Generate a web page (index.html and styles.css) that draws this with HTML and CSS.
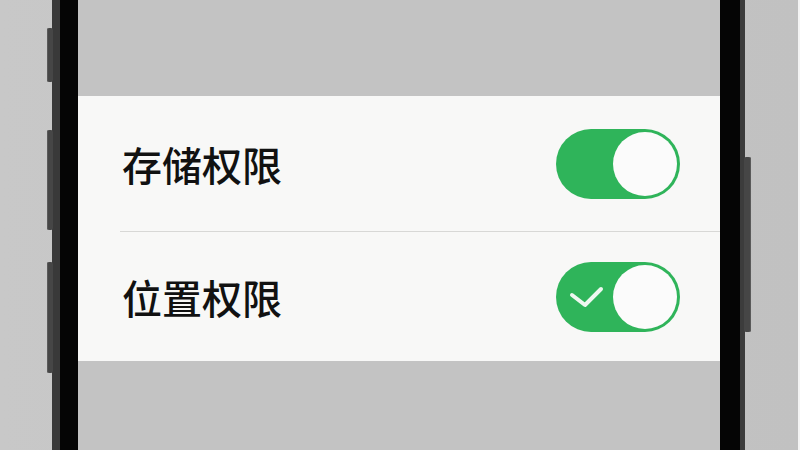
FILE: index.html
```html
<!DOCTYPE html>
<html lang="zh-CN">
<head>
    <meta charset="UTF-8">
    <meta name="viewport" content="width=device-width, initial-scale=1.0">
    <title>权限设置</title>
    <link rel="stylesheet" href="styles.css">
</head>
<body>
    <div class="stage">
    <div class="phone">
        <!-- боковые кнопки -->
        <span class="side-btn left b1"></span>
        <span class="side-btn left b2"></span>
        <span class="side-btn left b3"></span>
        <span class="side-btn right b4"></span>

        <div class="bezel left-bezel"></div>
        <div class="screen">
            <div class="spacer top"></div>
            <div class="panel">
                <div class="row">
                    <span class="label">存储权限</span>
                    <div class="toggle on">
                        <span class="knob"></span>
                    </div>
                </div>
                <div class="divider"></div>
                <div class="row">
                    <span class="label">位置权限</span>
                    <div class="toggle on">
                        <svg class="check" width="60" height="70" viewBox="0 0 60 70">
                            <path d="M16 33 L29 43 L45 27" fill="none" stroke="#eef7f0" stroke-width="4" stroke-linecap="round" stroke-linejoin="round"/>
                        </svg>
                        <span class="knob"></span>
                    </div>
                </div>
            </div>
            <div class="spacer bottom"></div>
        </div>
        <div class="bezel right-bezel"></div>
    </div>
    </div>
</body>
</html>
```

FILE: styles.css
```css
body {
    margin: 0;
    font-family: "Noto Sans CJK SC", "Noto Sans", sans-serif;
    background-color: #c6c6c6;
}
.stage {
    width: 800px;
    height: 450px;
    overflow: hidden;
    background: linear-gradient(to right, #c8c8c8, #c4c4c4 50%, #c1c1c1);
    border-right: 2px solid #f4f4f4;
    box-sizing: border-box;
}
.phone {
    position: relative;
    margin-left: 52px;
    width: 693px;
    height: 450px;
    display: flex;
    border-left: 8px solid #393939;
    border-right: 5px solid #3c3c3c;
    box-sizing: border-box;
}
.bezel {
    background-color: #050505;
}
.left-bezel {
    width: 18px;
}
.right-bezel {
    width: 20px;
}
.side-btn {
    position: absolute;
    width: 6px;
    background-color: #464646;
    border-radius: 2px;
    box-shadow: inset 1px 0 0 #5a5a5a;
}
.side-btn.left {
    left: -13px;
}
.side-btn.right {
    right: -11px;
    width: 7px;
    box-shadow: inset -1px 0 0 #5a5a5a;
}
.b1 { top: 28px; height: 54px; }
.b2 { top: 130px; height: 100px; }
.b3 { top: 262px; height: 111px; }
.b4 { top: 157px; height: 175px; }

.screen {
    flex: 1;
    display: flex;
    flex-direction: column;
    background-color: #c3c3c3;
}
.spacer.top {
    height: 96px;
}
.spacer.bottom {
    flex: 1;
}
.panel {
    background-color: #f8f8f7;
    display: flex;
    flex-direction: column;
}
.row {
    display: flex;
    align-items: center;
    justify-content: space-between;
    padding: 0 40px 0 44px;
}
.row:first-child {
    height: 135px;
}
.row:last-child {
    height: 129px;
}
.label {
    font-size: 40px;
    font-weight: 500;
    color: #111;
}
.divider {
    height: 1px;
    margin-left: 42px;
    background-color: #d8d8d6;
}
.toggle {
    position: relative;
    width: 124px;
    height: 70px;
    border-radius: 35px;
    background-color: #e0e0e0;
    display: flex;
    align-items: center;
    justify-content: flex-end;
    padding: 0 3px;
    box-sizing: border-box;
}
.toggle.on {
    background-color: #2fb45a;
}
.knob {
    width: 64px;
    height: 64px;
    border-radius: 50%;
    background-color: #fbfbfb;
}
.check {
    position: absolute;
    left: 0;
    top: 0;
}
```
